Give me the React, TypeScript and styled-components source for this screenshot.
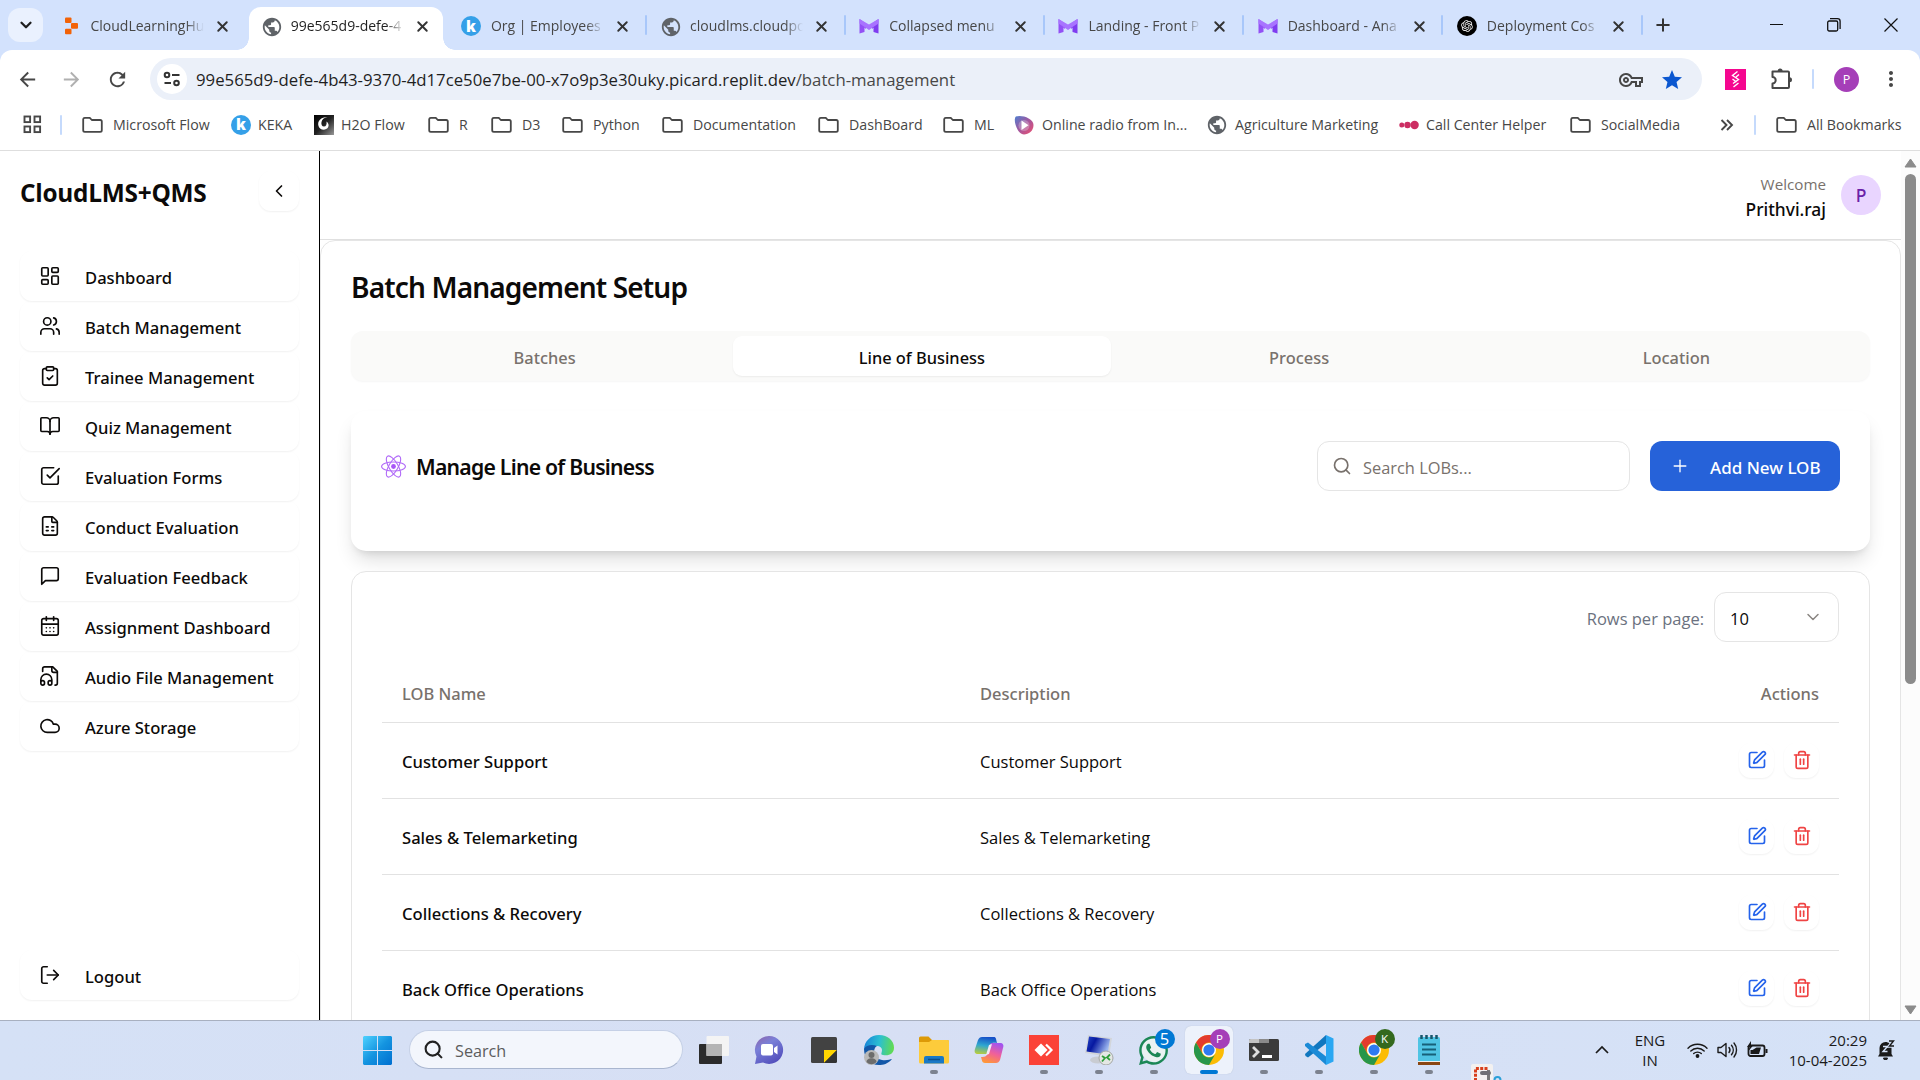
import React from "react";
import styled, { createGlobalStyle, css } from "styled-components";
import {
  BookOpen,
  CalendarDays,
  ChevronDown,
  ChevronLeft,
  ClipboardCheck,
  Cloud,
  FileSpreadsheet,
  LayoutDashboard,
  LogOut,
  Plus,
  Search,
  SquarePen,
  Trash2,
  Users,
  X,
} from "lucide-react";
import {
  MdArrowBack,
  MdArrowForward,
  MdMoreVert,
  MdOutlineVpnKey,
  MdPublic,
  MdRefresh,
  MdStar,
} from "react-icons/md";
import { FaWhatsapp } from "react-icons/fa";
import { RiOpenaiFill } from "react-icons/ri";

const GlobalStyle = createGlobalStyle`
  * { box-sizing: border-box; }
  html, body { margin: 0; padding: 0; overflow: hidden; background: #fff; }
  body { font-family: "Open Sans", "Noto Sans", sans-serif; color: #0c0a09; }
  svg { display: block; flex: none; }
`;

const medium = css`
  font-family: "Noto Sans", "Open Sans", sans-serif;
  font-weight: 500;
`;

const Screen = styled.div`
  width: 1920px;
  height: 1080px;
  display: flex;
  flex-direction: column;
  overflow: hidden;
`;

/* ---------- Browser tab strip ---------- */

const TabStrip = styled.header`
  height: 50px;
  flex: none;
  display: flex;
  background: #d3e2fd;
`;

const TabSearch = styled.div`
  width: 35px;
  height: 34px;
  margin: 8px 3px 0 8px;
  border-radius: 12px;
  background: #eaf1fe;
  display: grid;
  place-items: center;
  color: #1f1f1f;
`;

const TabBox = styled.div<{ $active?: boolean }>`
  position: relative;
  width: 199.2px;
  display: flex;
  align-items: center;
  padding: 2px 0 0 14.5px;
  color: ${(p) => (p.$active ? "#1f1f1f" : "#474747")};
  ${(p) =>
    p.$active &&
    css`
      width: 194px;
      margin: 7px 3.2px 0 4px;
      padding: 0 0 5px 11.5px;
      background: #fff;
      border-radius: 12px 12px 0 0;
      &::before,
      &::after {
        content: "";
        position: absolute;
        bottom: 0;
        width: 12px;
        height: 12px;
      }
      &::before {
        left: -12px;
        background: radial-gradient(circle at 0 0, transparent 11.5px, #fff 12px);
      }
      &::after {
        right: -12px;
        background: radial-gradient(circle at 100% 0, transparent 11.5px, #fff 12px);
      }
    `}
`;

const TabIcon = styled.span`
  width: 20px;
  height: 20px;
  margin-right: 10px;
  flex: none;
  display: grid;
  place-items: center;
  color: #5f6368;
`;

const TabTitle = styled.span`
  width: 113px;
  flex: none;
  overflow: hidden;
  white-space: nowrap;
  font-size: 14px;
  line-height: 24px;
  mask-image: linear-gradient(to right, #000 84%, transparent);
`;

const TabClose = styled.span`
  margin-left: 10px;
  color: #333;
`;

const Divider = styled.span<{ $h: number; $c?: string }>`
  width: 2px;
  height: ${(p) => p.$h}px;
  flex: none;
  border-radius: 1px;
  background: ${(p) => p.$c ?? "#a8c7fa"};
`;

const TabDivider = styled(Divider)`
  margin: 15px -1px 0;
`;

const NewTab = styled.span`
  margin: 15px 0 0 11px;
  color: #333;
`;

const WindowButtons = styled.div`
  margin-left: auto;
  display: flex;
  align-items: center;
  gap: 43px;
  padding-right: 22px;
  height: 49px;
`;

/* ---------- Address bar ---------- */

const ToolbarBack = styled.div`
  flex: none;
  background: #d3e2fd;
`;

const Toolbar = styled.div`
  height: 58px;
  display: flex;
  align-items: center;
  background: #fff;
  border-radius: 12px 12px 0 0;
  padding: 0 16px;
  color: #474747;
`;

const NavButton = styled.span<{ $gap: number; $dim?: boolean }>`
  width: 24px;
  margin-right: ${(p) => p.$gap}px;
  color: ${(p) => (p.$dim ? "#b0b0b0" : "#474747")};
`;

const Omnibox = styled.div`
  width: 1552px;
  height: 42px;
  margin-right: 23px;
  border-radius: 21px;
  background: #ebf0f9;
  display: flex;
  align-items: center;
  padding: 0 18px 0 7px;
`;

const SiteInfo = styled.span`
  width: 30px;
  height: 30px;
  margin-right: 9px;
  border-radius: 50%;
  background: #fff;
  display: grid;
  place-items: center;
`;

const Url = styled.span`
  flex: 1;
  padding-top: 1px;
  font-size: 16.75px;
  line-height: 28px;
  color: #474747;
  white-space: nowrap;
  b {
    font-weight: 400;
    color: #1f1f1f;
  }
`;

const OmniIcons = styled.span`
  display: flex;
  align-items: center;
  gap: 17px;
  padding-top: 1px;
`;

const Extensions = styled.div`
  display: flex;
  align-items: center;
  flex: none;
`;

const ExtensionsButton = styled.span`
  margin: 0 19px 0 24px;
`;

const ProfileDot = styled.span`
  width: 25px;
  height: 25px;
  margin: 0 20px;
  border-radius: 50%;
  background: #a53fb8;
  color: #fff;
  display: grid;
  place-items: center;
  font-size: 12.5px;
  line-height: 25px;
`;

/* ---------- Bookmarks ---------- */

const BookmarkBar = styled.div`
  height: 43px;
  flex: none;
  display: flex;
  align-items: center;
  padding: 0 0 9px 23px;
  border-bottom: 1px solid #dedede;
  color: #474747;
`;

const AppsIcon = styled.span`
  margin-right: 18px;
`;

const BookmarkDivider = styled(Divider)`
  margin-right: 20px;
`;

const BookmarkItem = styled.span<{ $w: number; $gap?: number }>`
  width: ${(p) => p.$w}px;
  flex: none;
  display: flex;
  align-items: center;
  white-space: nowrap;
  font-size: 14.2px;
  line-height: 24px;
  > :first-child {
    margin-right: ${(p) => p.$gap ?? 10}px;
  }
`;

const MoreBookmarks = styled.span`
  width: 34px;
`;

const BadgeLetter = styled.span`
  width: 20px;
  height: 20px;
  border-radius: 50%;
  background: #35a0e8;
  color: #fff;
  display: grid;
  place-items: center;
  font-size: 15px;
  font-weight: 800;
  line-height: 19px;
`;

/* ---------- Page ---------- */

const Page = styled.div`
  height: 869px;
  flex: none;
  display: flex;
  overflow: hidden;
`;

const Sidebar = styled.aside`
  width: 320px;
  flex: none;
  display: flex;
  flex-direction: column;
  padding: 20px;
  border-right: 1px solid #000;
`;

const SidebarHead = styled.div`
  height: 40px;
  flex: none;
  display: flex;
  align-items: center;
  justify-content: space-between;
  margin-bottom: 40px;
`;

const Brand = styled.h1`
  margin: 4px 0 0;
  font-size: 24.4px;
  font-weight: 700;
  letter-spacing: -0.25px;
  line-height: 34px;
`;

const SoftButton = styled.span<{ $size: number; $c?: string }>`
  width: ${(p) => p.$size}px;
  height: ${(p) => p.$size}px;
  border-radius: 12px;
  box-shadow: 0 1px 2px rgba(0, 0, 0, 0.06);
  display: grid;
  place-items: center;
  color: ${(p) => p.$c ?? "#0c0a09"};
`;

const MenuItem = styled.a<{ $bottom?: boolean }>`
  height: 50px;
  flex: none;
  display: flex;
  align-items: center;
  padding-left: 19px;
  border-radius: 12px;
  box-shadow: 0 1px 2px rgba(0, 0, 0, 0.06);
  margin-top: ${(p) => (p.$bottom ? "auto" : 0)};
`;

const MenuLabel = styled.span`
  ${medium}
  margin-left: 24px;
  padding-top: 3px;
  font-size: 16.6px;
  line-height: 24px;
  white-space: nowrap;
`;

const Main = styled.div`
  width: 1581px;
  flex: none;
  display: flex;
  flex-direction: column;
`;

const TopBar = styled.div`
  height: 89px;
  flex: none;
  display: flex;
  align-items: flex-start;
  justify-content: flex-end;
  padding: 24px 20px 0 0;
  border-bottom: 1px solid #e0e0e0;
`;

const Greeting = styled.div`
  margin: -1px 15px 0 0;
  text-align: right;
`;

const Welcome = styled.div`
  font-size: 15.2px;
  line-height: 20px;
  color: #78716c;
`;

const UserName = styled.div`
  ${medium}
  padding-top: 2px;
  font-size: 17.4px;
  line-height: 26px;
`;

const Avatar = styled.span`
  ${medium}
  width: 40px;
  height: 40px;
  border-radius: 50%;
  background: #e9d5ff;
  color: #6b21a8;
  display: grid;
  place-items: center;
  font-size: 17.5px;
  line-height: 41px;
`;

const Panel = styled.main`
  height: 900px;
  flex: none;
  border: 1px solid #e5e5e5;
  border-radius: 15px;
  padding: 28px 30px 0;
`;

const Heading = styled.h2`
  font-family: "Noto Sans", sans-serif;
  font-weight: 600;
  margin: 0 0 25px;
  font-size: 28.1px;
  letter-spacing: -0.88px;
  line-height: 37px;
`;

const TabList = styled.div`
  height: 50px;
  display: grid;
  grid-template-columns: repeat(4, 1fr);
  padding: 5px;
  border-radius: 12px;
  background: #fafaf9;
  box-shadow: 0 1px 2px rgba(0, 0, 0, 0.04);
  margin-bottom: 30px;
`;

const PageTab = styled.span<{ $active?: boolean }>`
  ${medium}
  display: flex;
  align-items: center;
  justify-content: center;
  padding-top: 3px;
  border-radius: 9px;
  font-size: 16.4px;
  line-height: 24px;
  color: ${(p) => (p.$active ? "#0c0a09" : "#78716c")};
  ${(p) => p.$active && "background: #fff; box-shadow: 0 1px 2px rgba(0,0,0,.06);"}
`;

const ManageCard = styled.section`
  height: 140px;
  display: flex;
  align-items: flex-start;
  padding: 30px;
  border-radius: 15px;
  background: #fff;
  box-shadow: 0 12px 20px -4px rgba(0, 0, 0, 0.14), 0 5px 8px -5px rgba(0, 0, 0, 0.14);
  margin-bottom: 20px;
`;

const CardTitle = styled.h3`
  font-family: "Noto Sans", sans-serif;
  font-weight: 600;
  margin: 0 auto 0 0;
  height: 50px;
  display: flex;
  align-items: center;
  gap: 10px;
  font-size: 21.2px;
  letter-spacing: -0.76px;
`;

const SearchField = styled.div`
  width: 313px;
  height: 50px;
  margin-right: 20px;
  padding-left: 14px;
  display: flex;
  align-items: center;
  gap: 11px;
  border: 1px solid #e5e5e5;
  border-radius: 12px;
  color: #78716c;
  font-size: 16.4px;
`;

const Nudge = styled.span`
  padding-top: 3px;
  line-height: 24px;
  white-space: nowrap;
`;

const AddButton = styled.button`
  ${medium}
  width: 190px;
  height: 50px;
  display: flex;
  align-items: center;
  gap: 20px;
  padding: 0 0 0 20px;
  border: 0;
  border-radius: 12px;
  background: #2662d9;
  color: #fff;
  font-size: 17px;
`;

const TableCard = styled.section`
  height: 600px;
  border: 1px solid #e5e5e5;
  border-radius: 15px;
  padding: 20px 30px 0;
  background: #fff;
`;

const PagerRow = styled.div`
  display: flex;
  justify-content: flex-end;
  align-items: center;
  gap: 10px;
  height: 50px;
  font-size: 16.5px;
  color: #6b7280;
`;

const PageSize = styled.div`
  width: 125px;
  height: 50px;
  display: flex;
  align-items: center;
  justify-content: space-between;
  padding: 0 15px;
  border: 1px solid #e5e5e5;
  border-radius: 12px;
  color: #0c0a09;
  > svg {
    color: #8a8682;
  }
`;

const Row = styled.div<{ $head?: boolean }>`
  height: ${(p) => (p.$head ? 81 : 76)}px;
  display: grid;
  grid-template-columns: 578px 1fr auto;
  align-items: center;
  padding: ${(p) => (p.$head ? "22px 20px 0" : "0 20px")};
  border-bottom: 1px solid #e2e2e2;
  font-size: 16.5px;
  ${(p) =>
    p.$head &&
    css`
      ${medium}
      color: #78716c;
    `}
`;

const LobName = styled(Nudge)`
  ${medium}
  font-size: 16.6px;
`;

const Actions = styled.span`
  display: flex;
  gap: 10px;
  padding-bottom: 1px;
`;

const ScrollTrack = styled.div`
  width: 19px;
  flex: none;
  display: flex;
  flex-direction: column;
  align-items: center;
  background: #fcfcfc;
  padding: 7px 0 5px;
`;

const Thumb = styled.span`
  width: 11px;
  height: 510px;
  margin: 6px 0 auto;
  border-radius: 6px;
  background: #8b8b8b;
`;

/* ---------- Taskbar ---------- */

const Taskbar = styled.footer`
  height: 60px;
  flex: none;
  display: flex;
  border-top: 1px solid #a8b0c0;
  background: linear-gradient(to right, #d5e1f6, #d7dff4 45%, #d5e2f7);
  padding-left: 362px;
`;

const StartButton = styled.span`
  margin: 15px 17px 0 1px;
`;

const TaskSearch = styled.div`
  width: 274px;
  height: 39px;
  margin: 9px 3px 0 0;
  display: flex;
  align-items: center;
  gap: 11px;
  padding-left: 13px;
  border: 1px solid #c5d0e6;
  border-bottom-color: #a9b6cf;
  border-radius: 20px;
  background: #f3f6fc;
  color: #5c5c5c;
  font-size: 16.2px;
  > span {
    padding-top: 2px;
    line-height: 24px;
  }
`;

const TaskSlot = styled.span<{ $active?: boolean }>`
  position: relative;
  width: 48px;
  height: 48px;
  margin: 5px 3.5px 0;
  flex: none;
  border-radius: 6px;
  display: grid;
  place-items: center;
  ${(p) => p.$active && "background: #edf2fb; box-shadow: 0 0 1px #aab6cc;"}
`;

const Running = styled.span<{ $active?: boolean }>`
  position: absolute;
  bottom: 0;
  left: 50%;
  transform: translateX(-50%);
  width: ${(p) => (p.$active ? 18 : 8)}px;
  height: 4px;
  border-radius: 2px;
  background: ${(p) => (p.$active ? "#0078d4" : "#7c828f")};
`;

const CountBadge = styled.span<{ $bg: string; $small?: boolean }>`
  position: absolute;
  top: 3px;
  right: 3px;
  width: 20px;
  height: 20px;
  border-radius: 50%;
  background: ${(p) => p.$bg};
  color: #fff;
  text-align: center;
  font-size: ${(p) => (p.$small ? 11.5 : 16.5)}px;
  line-height: 20px;
`;

const SnipSlot = styled.span`
  margin: 43px 0 0 15px;
`;

const Tray = styled.div`
  margin-left: auto;
  display: flex;
  align-items: center;
  color: #1a1a1a;
  font-size: 15px;
  line-height: 20px;
  padding: 0 25px 2px 0;
`;

const Language = styled.span`
  width: 34px;
  margin: 0 20px 0 24px;
  text-align: center;
`;

const TrayIcons = styled.span`
  display: flex;
  align-items: center;
  gap: 9px;
`;

const Clock = styled.span`
  width: 84px;
  margin: 0 10px 0 15px;
  text-align: right;
  white-space: nowrap;
`;

/* ---------- Drawings ---------- */

const Globe = () => <MdPublic size={22} color="#5f6368" />;

const ReplitLogo = () => (
  <svg width="20" height="20" viewBox="0 0 20 20" fill="#f26207">
    <rect x="4" y="1.500" width="6.500" height="5.600" rx="1" />
    <rect x="10" y="7.100" width="7" height="5.600" rx="1" />
    <rect x="4" y="12.700" width="6.500" height="5.600" rx="1" />
  </svg>
);

const MokkupLogo = () => (
  <svg width="20" height="20" viewBox="0 0 20 20">
    <path d="M.5 3 7 7.500V13l-1.500-1.500V16l-5 1.500Z" fill="#9350f5" />
    <path d="M19.500 3 13 7.500V13l1.500-1.500V16l5 1.500Z" fill="#7f3cf0" />
    <path d="M.5 3 10 8.500 19.500 3v4.500L10 14 .5 7.500Z" fill="#a873ff" />
  </svg>
);

const OpenAiLogo = () => (
  <svg width="20" height="20" viewBox="0 0 20 20">
    <circle cx="10" cy="10" r="10" fill="#000" />
    <RiOpenaiFill x="3" y="3" size={14} color="#fff" />
  </svg>
);

const FolderIcon = () => (
  <svg width="21" height="18" viewBox="0 0 21 18" fill="none" stroke="#474747" strokeWidth="1.8" strokeLinejoin="round">
    <path d="M1.200 3.200A1.600 1.600 0 0 1 2.800 1.800h5l2 2.200h8.400a1.600 1.600 0 0 1 1.600 1.600v8.600a1.600 1.600 0 0 1-1.600 1.600H2.800a1.600 1.600 0 0 1-1.600-1.600Z" />
  </svg>
);

const H2oIcon = () => (
  <svg width="20" height="20" viewBox="0 0 20 20">
    <defs>
      <linearGradient id="h2o" x1="0" y1="0" x2="1" y2="1">
        <stop offset="0" stopColor="#000" />
        <stop offset=".5" stopColor="#222" />
        <stop offset="1" stopColor="#999" />
      </linearGradient>
    </defs>
    <rect width="20" height="20" fill="url(#h2o)" />
    <path d="M13.500 2C7 2 3 6 4.500 11c1 4 7 5 9.500 1.500 1.500-2.500 0-5-1.500-6 .5 3-.5 5-2.500 5S7 9.500 7.500 7s2.500-4.500 6-5Z" fill="#fff" />
  </svg>
);

const RadioIcon = () => (
  <svg width="20" height="20" viewBox="0 0 20 20">
    <defs>
      <linearGradient id="radio" x1="0" y1="0" x2="1" y2="1">
        <stop offset="0" stopColor="#4e7fd0" />
        <stop offset=".5" stopColor="#a4569d" />
        <stop offset="1" stopColor="#f0506e" />
      </linearGradient>
    </defs>
    <path d="M2 1.500C7-.5 19.500 3 19.500 10c0 6-5 9.500-9.500 9.500C3 19.500-1.500 4 2 1.500Z" fill="url(#radio)" />
    <circle cx="10" cy="10.500" r="5.500" fill="#fff" opacity=".25" />
    <path d="m7.500 5.500 7 4.800-7 4.800Z" fill="#fff" />
  </svg>
);

const DotsIcon = () => (
  <svg width="20" height="12" viewBox="0 0 20 12" fill="#cc2e63">
    <circle cx="2.800" cy="6" r="2.500" />
    <circle cx="8.500" cy="6" r="3.200" />
    <circle cx="15.600" cy="6" r="4.200" />
  </svg>
);

const AppsGrid = () => (
  <svg width="19" height="19" viewBox="0 0 19 19" fill="none" stroke="#474747" strokeWidth="1.900">
    <rect x="1.500" y="1.500" width="5.600" height="5.600" />
    <rect x="11.500" y="1.500" width="5.600" height="5.600" />
    <rect x="1.500" y="11.500" width="5.600" height="5.600" />
    <rect x="11.500" y="11.500" width="5.600" height="5.600" />
  </svg>
);

const TuneIcon = () => (
  <svg width="18" height="18" viewBox="0 0 18 18" fill="none" stroke="#333" strokeWidth="2">
    <circle cx="4" cy="5" r="2.300" />
    <path d="M9 5h7.500M1.500 13H8" />
    <circle cx="13.500" cy="13" r="2.300" />
  </svg>
);

const StripeExtension = () => (
  <svg width="21" height="21" viewBox="0 0 21 21" fill="none">
    <rect width="21" height="21" fill="#f5068f" />
    <path d="m12.500 2.500-5 4 6 4-5.500 4M14 5.500l-3 2.500M7.500 10l4 3M13.500 14l-5 4" stroke="#fff" strokeWidth="1.400" />
  </svg>
);

const PuzzleIcon = () => (
  <svg width="23" height="24" viewBox="0 0 23 24">
    <path
      d="M2.500 4.500h15.500a1 1 0 0 1 1 1V20a1 1 0 0 1-1 1h-15.500v-4.500a3.200 3.200 0 0 0 0-6.400Z"
      fill="none"
      stroke="#474747"
      strokeWidth="2"
      strokeLinejoin="round"
    />
    <path d="M7.600 4a2.500 2.500 0 0 1 5 0ZM19.500 10.200a2.500 2.500 0 0 1 0 5Z" fill="#474747" />
  </svg>
);

const ReactMark = () => (
  <svg width="25" height="23" viewBox="-11.500 -10.600 23 21.200" fill="none" stroke="#b069f8">
    <circle r="2.200" fill="#a855f7" stroke="none" />
    <ellipse rx="11" ry="4.200" />
    <ellipse rx="11" ry="4.200" transform="rotate(60)" />
    <ellipse rx="11" ry="4.200" transform="rotate(120)" />
  </svg>
);

const StrokeIcon = ({ paths }: { paths: string[] }) => (
  <svg width="22" height="22" viewBox="0 0 24 24" fill="none" stroke="currentColor" strokeWidth="1.8" strokeLinecap="round" strokeLinejoin="round">
    {paths.map((d) => (
      <path key={d} d={d} />
    ))}
  </svg>
);

const Triangle = ({ down }: { down?: boolean }) => (
  <svg width="13" height="10" viewBox="0 0 13 10" fill="#8b8b8b" stroke="#8b8b8b" strokeLinejoin="round">
    <path d={down ? "M1 1h11L6.500 9Z" : "M1 9h11L6.500 1Z"} />
  </svg>
);

const WindowsLogo = () => (
  <svg width="29" height="29" viewBox="0 0 29 29">
    <defs>
      <linearGradient id="win" x1="0" y1="0" x2="1" y2="1">
        <stop offset="0" stopColor="#4fd2ff" />
        <stop offset=".5" stopColor="#1494e0" />
        <stop offset="1" stopColor="#006fd0" />
      </linearGradient>
    </defs>
    <path d="M1 0h13v14H0V1Zm14 0h13l1 1v13H15ZM0 15h14v14H1l-1-1Zm15 0h14v13l-1 1H15Z" fill="url(#win)" />
  </svg>
);

const TaskView = () => (
  <svg width="30" height="30" viewBox="0 0 30 30">
    <rect y="9" width="23" height="20" rx="1" fill="#2b2b2b" />
    <rect x="7.500" y="1" width="22.500" height="20" rx="1" fill="#f4f4f4" />
    <path d="M7.500 9H23v12H7.500Z" fill="#b4b4b4" />
  </svg>
);

const TeamsChat = () => (
  <svg width="30" height="30" viewBox="0 0 30 30">
    <defs>
      <linearGradient id="chat" x1="0" y1="0" x2=".6" y2="1">
        <stop offset="0" stopColor="#8f63a8" />
        <stop offset=".4" stopColor="#7a80d8" />
        <stop offset="1" stopColor="#5450bd" />
      </linearGradient>
    </defs>
    <path d="M15 1a14 14 0 1 1-6 26.600L1 29l1.500-7.500A14 14 0 0 1 15 1Z" fill="url(#chat)" />
    <rect x="7" y="9" width="12" height="11.500" rx="2" fill="#fff" />
    <path d="m20 13 3.500-2.500v9L20 17Z" fill="#fff" />
  </svg>
);

const StickyNotes = () => (
  <svg width="28" height="28" viewBox="0 0 28 28">
    <rect x="1" y="1" width="26" height="26" rx="1.500" fill="#424242" />
    <path d="M14 27V14h13Z" fill="#ffd500" />
    <path d="M14 27 27 14v11.500L25.500 27Z" fill="#333" />
  </svg>
);

const EdgeLogo = () => (
  <svg width="32" height="30" viewBox="0 0 32 30">
    <defs>
      <linearGradient id="edge" x1="0" y1=".4" x2="1" y2=".5">
        <stop offset="0" stopColor="#1683d8" />
        <stop offset=".5" stopColor="#2bbfd2" />
        <stop offset="1" stopColor="#63dc4e" />
      </linearGradient>
    </defs>
    <path d="M1 15C1 6 8 0 16 0c9 0 15 6 15 12.500S26 21 20 20c-3-.5-1-2-1-5 0-2-2-4-5-4-6 0-12 2-13 4Z" fill="url(#edge)" />
    <path d="M1 14c2-4 8-5 13-3-4 2-5 12 5 14 5 1 8-1 10-1-4 5-9 6-13 6C7 30 1 23 1 14Z" fill="#1257a8" />
    <circle cx="8.500" cy="22.500" r="7.500" fill="#b9b9b9" />
    <circle cx="8.500" cy="20" r="3" fill="#6c6c6c" />
    <path d="M3.500 27c0-5 10-5 10 0-3 3-7 3-10 0Z" fill="#6c6c6c" />
  </svg>
);

const ExplorerIcon = () => (
  <svg width="30" height="28" viewBox="0 0 30 28">
    <path d="M0 2a1.500 1.500 0 0 1 1.500-1.500h8L13 4h15.500A1.500 1.500 0 0 1 30 5.500V9H0Z" fill="#dd9a07" />
    <path d="M0 6h10l3-2h15.500A1.500 1.500 0 0 1 30 5.500V26a1.500 1.500 0 0 1-1.500 1.500h-27A1.500 1.500 0 0 1 0 26Z" fill="#fdcb3b" />
    <path d="M5 27.500V22a2 2 0 0 1 2-2h16a2 2 0 0 1 2 2v5.500Z" fill="#1a79c6" />
    <path d="M9 23.500h12" stroke="#0e4f8b" strokeWidth="1.500" />
  </svg>
);

const CopilotIcon = () => (
  <svg width="30" height="28" viewBox="0 0 30 28">
    <defs>
      <linearGradient id="cpA" x1=".5" y1="0" x2=".3" y2="1">
        <stop offset="0" stopColor="#1750c8" />
        <stop offset=".5" stopColor="#2fa7d0" />
        <stop offset="1" stopColor="#b7cc40" />
      </linearGradient>
      <linearGradient id="cpB" x1=".7" y1="0" x2=".3" y2="1">
        <stop offset="0" stopColor="#a254f0" />
        <stop offset=".5" stopColor="#f0609a" />
        <stop offset="1" stopColor="#ff9838" />
      </linearGradient>
    </defs>
    <path d="M8 1h12c2 0 2 2 3 6-6-1-7 1-8 5l-2 6H4c-3 0-4-2-3-5L4 4c1-2 2-3 4-3Z" fill="url(#cpA)" />
    <path d="M22 27H11c-3 0-3-3-4-6 5 0 6-1 7-5l3-9h9c3 0 4 2 3 5l-3 12c-1 2-2 3-4 3Z" fill="url(#cpB)" />
    <path d="m15 9-3 10 3-1 3-10Z" fill="#f3e9f5" />
  </svg>
);

const AnyDesk = () => (
  <svg width="30" height="30" viewBox="0 0 30 30">
    <rect width="30" height="30" fill="#fb4237" />
    <path d="M5.500 15 12 8.500l6.500 6.500-6.500 6.500Z" fill="#fff" />
    <path d="m17 9.500 5.500 5.500-5.500 5.500" fill="none" stroke="#fff" strokeWidth="2.200" />
  </svg>
);

const RemoteDesktop = () => (
  <svg width="30" height="30" viewBox="0 0 30 30">
    <defs>
      <linearGradient id="rdp" x1="0" y1="0" x2="1" y2=".4">
        <stop offset="0" stopColor="#2748c8" />
        <stop offset=".4" stopColor="#0618a0" />
        <stop offset="1" stopColor="#9db8f0" />
      </linearGradient>
    </defs>
    <ellipse cx="14" cy="25" rx="8" ry="3.500" fill="#c9ccd2" />
    <path d="M4 0 28 3 25 22 1 18Z" fill="#d2d5da" />
    <path d="M5 1.500 26 4l-2.500 15.500L2.500 16.500Z" fill="url(#rdp)" />
    <circle cx="22" cy="23" r="7" fill="#e4e7e4" stroke="#a5a8a5" />
    <path d="m18 21 3 2-3 3.500M26 19.500l-3 3 3 2.500" fill="none" stroke="#2f9e3a" strokeWidth="1.800" />
  </svg>
);

const WhatsAppIcon = () => (
  <svg width="33" height="33" viewBox="0 0 33 33">
    <circle cx="17" cy="16" r="12" fill="#eaf2f2" />
    <FaWhatsapp size={33} color="#1b8755" />
  </svg>
);

const ChromeLogo = () => (
  <svg width="30" height="30" viewBox="0 0 30 30">
    <circle cx="15" cy="15" r="15" fill="#fbbc05" />
    <path d="M2 7.500A15 15 0 0 1 28 7.500H15a7.500 7.500 0 0 0-6.500 11.200Z" fill="#e33b2e" />
    <path d="M2 7.500a15 15 0 0 0 13 22.500l6.500-11.200a7.500 7.500 0 0 1-13 0Z" fill="#27964a" />
    <circle cx="15" cy="15" r="7" fill="#fff" />
    <circle cx="15" cy="15" r="5.600" fill="#2f7af0" />
  </svg>
);

const TerminalIcon = () => (
  <svg width="30" height="22" viewBox="0 0 30 22">
    <rect width="30" height="22" rx="1.500" fill="#3b3b3b" />
    <path d="M0 4V1.500A1.500 1.500 0 0 1 1.500 0H10v4Z" fill="#c4c4c4" />
    <path d="M10 0h10v4H10Z" fill="#8a8a8a" />
    <path d="m4 8 5 5-5 5" fill="none" stroke="#ddd" strokeWidth="2.800" />
    <path d="M13 17.500h10" stroke="#fff" strokeWidth="3" />
  </svg>
);

const VsCodeIcon = () => (
  <svg width="30" height="30" viewBox="0 0 30 30">
    <path d="M22 0v8.500L4 22.500l-2.500-1.500L1 19Z" fill="#1177bf" />
    <path d="M22 30v-8.500L4 7.500 1 9v2Z" fill="#1b8ad6" />
    <path d="m22 0 7.500 3.500v23L22 30Z" fill="#2aa7f2" />
  </svg>
);

const NotepadIcon = () => (
  <svg width="22" height="30" viewBox="0 0 22 30">
    <rect y="2" width="22" height="25" rx="1.500" fill="#4fc4e4" />
    <path d="M0 27h22v3H0Z" fill="#8a4613" />
    <path d="M0 26.500h22" stroke="#eee" />
    <path d="M3.500 0v4M8.500 0v4M13.500 0v4M18.500 0v4" stroke="#17556b" strokeWidth="2.500" />
    <path d="M4 9.500h14M4 14.500h14M4 19.500h14" stroke="#176078" strokeWidth="2" />
  </svg>
);

const SnipIcon = () => (
  <svg width="32" height="17" viewBox="0 0 32 17">
    <rect width="22" height="24" rx="2" fill="#f3f1f0" />
    <path d="M4.500 17V4.500H17" fill="none" stroke="#d8401c" strokeWidth="3" strokeDasharray="3 1.300" />
    <path d="M17.500 6v11" stroke="#777" strokeWidth="3" />
    <rect x="9" y="7" width="11" height="4" rx="2" fill="#6f6f74" />
    <circle cx="26.500" cy="16" r="3" fill="none" stroke="#2a9fd8" strokeWidth="2" />
  </svg>
);

const WifiIcon = () => (
  <svg width="21" height="16" viewBox="0 0 21 16" fill="none" stroke="#1a1a1a" strokeWidth="1.400" strokeLinecap="round">
    <path d="M1 6.200a13.500 13.500 0 0 1 19 0M3.800 9a9.500 9.500 0 0 1 13.400 0M6.700 11.600a5.500 5.500 0 0 1 7.600 0" />
    <circle cx="10.500" cy="14" r="1.200" fill="#1a1a1a" />
  </svg>
);

const SpeakerIcon = () => (
  <svg width="21" height="18" viewBox="0 0 21 18" fill="none" stroke="#1a1a1a" strokeWidth="1.400" strokeLinecap="round" strokeLinejoin="round">
    <path d="M1 6.500v5h3l5 4v-13l-5 4ZM12 6.500a4 4 0 0 1 0 5M14.500 4.200a7.500 7.500 0 0 1 0 9.600M17 2a11 11 0 0 1 0 14" />
  </svg>
);

const BatteryIcon = () => (
  <svg width="21" height="17" viewBox="0 0 21 17">
    <rect x="1.500" y="4.500" width="16" height="10.500" rx="2" fill="none" stroke="#1a1a1a" strokeWidth="1.800" />
    <path d="M3.500 13v-4h2l4-2.500H14L12 13ZM18.500 8v4h2V8ZM4 0 0 6h2.500L1.500 10 6.500 4H4Z" fill="#1a1a1a" />
  </svg>
);

const BellIcon = () => (
  <svg width="18" height="20" viewBox="0 0 18 20">
    <path d="M2.500 14V8a6 6 0 0 1 6-6c3 0 6 2 6 6v6l1.500 2.500H1Z" fill="#1a1a1a" />
    <path d="M6.500 18h4a2 2 0 0 1-4 0Z" fill="#1a1a1a" stroke="#1a1a1a" />
    <path d="M6 6.500h4.500L6 11.500h4.500" fill="none" stroke="#d5e2f7" strokeWidth="1.400" />
    <path d="M12 1h4.500L12.500 6h4.500" fill="none" stroke="#d5e2f7" strokeWidth="3.500" />
    <path d="M12 1h4.500L12.500 6h4.500" fill="none" stroke="#1a1a1a" strokeWidth="1.400" />
  </svg>
);

/* ---------- Data ---------- */

const tabs = [
  { title: "CloudLearningHu", icon: <ReplitLogo /> },
  { title: "99e565d9-defe-4", icon: <Globe />, active: true },
  { title: "Org | Employees", icon: <BadgeLetter>k</BadgeLetter> },
  { title: "cloudlms.cloudpo", icon: <Globe />, sep: true },
  { title: "Collapsed menu", icon: <MokkupLogo />, sep: true },
  { title: "Landing - Front P", icon: <MokkupLogo />, sep: true },
  { title: "Dashboard - Ana", icon: <MokkupLogo />, sep: true },
  { title: "Deployment Cos", icon: <OpenAiLogo />, sep: true },
];

const bookmarks = [
  { label: "Microsoft Flow", w: 149, icon: <FolderIcon /> },
  { label: "KEKA", w: 83, gap: 7, icon: <BadgeLetter>k</BadgeLetter> },
  { label: "H2O Flow", w: 114, gap: 7, icon: <H2oIcon /> },
  { label: "R", w: 63, icon: <FolderIcon /> },
  { label: "D3", w: 71, icon: <FolderIcon /> },
  { label: "Python", w: 100, icon: <FolderIcon /> },
  { label: "Documentation", w: 156, icon: <FolderIcon /> },
  { label: "DashBoard", w: 125, icon: <FolderIcon /> },
  { label: "ML", w: 71, icon: <FolderIcon /> },
  { label: "Online radio from In...", w: 192, gap: 8, icon: <RadioIcon /> },
  { label: "Agriculture Marketing", w: 193, gap: 7, icon: <Globe /> },
  { label: "Call Center Helper", w: 171, gap: 7, icon: <DotsIcon /> },
  { label: "SocialMedia", w: 150, icon: <FolderIcon /> },
];

const iconProps = { size: 22, strokeWidth: 1.8 };

const menu = [
  { label: "Dashboard", icon: <LayoutDashboard {...iconProps} /> },
  { label: "Batch Management", icon: <Users {...iconProps} /> },
  { label: "Trainee Management", icon: <ClipboardCheck {...iconProps} /> },
  { label: "Quiz Management", icon: <BookOpen {...iconProps} /> },
  {
    label: "Evaluation Forms",
    icon: <StrokeIcon paths={["m9 11 3 3L22 4", "M21 12v7a2 2 0 0 1-2 2H5a2 2 0 0 1-2-2V5a2 2 0 0 1 2-2h11"]} />,
  },
  { label: "Conduct Evaluation", icon: <FileSpreadsheet {...iconProps} /> },
  {
    label: "Evaluation Feedback",
    icon: <StrokeIcon paths={["M21 15a2 2 0 0 1-2 2H7l-4 4V5a2 2 0 0 1 2-2h14a2 2 0 0 1 2 2z"]} />,
  },
  { label: "Assignment Dashboard", icon: <CalendarDays {...iconProps} /> },
  {
    label: "Audio File Management",
    icon: (
      <StrokeIcon
        paths={[
          "M17.5 22h.5a2 2 0 0 0 2-2V7l-5-5H6a2 2 0 0 0-2 2v3",
          "M14 2v4a2 2 0 0 0 2 2h4",
          "M2 19a2 2 0 1 1 4 0v1a2 2 0 1 1-4 0v-4a6 6 0 0 1 12 0v4a2 2 0 1 1-4 0v-1a2 2 0 1 1 4 0",
        ]}
      />
    ),
  },
  { label: "Azure Storage", icon: <Cloud {...iconProps} /> },
];

const lobs = ["Customer Support", "Sales & Telemarketing", "Collections & Recovery", "Back Office Operations"];

const apps = [
  { id: "view", icon: <TaskView /> },
  { id: "chat", icon: <TeamsChat /> },
  { id: "notes", icon: <StickyNotes /> },
  { id: "edge", icon: <EdgeLogo /> },
  { id: "files", icon: <ExplorerIcon />, running: true },
  { id: "copilot", icon: <CopilotIcon /> },
  { id: "anydesk", icon: <AnyDesk />, running: true },
  { id: "rdp", icon: <RemoteDesktop />, running: true },
  { id: "whatsapp", icon: <WhatsAppIcon />, running: true, badge: "5", bg: "#0078d4" },
  { id: "chrome-p", icon: <ChromeLogo />, running: true, active: true, badge: "P", bg: "#a53fb8" },
  { id: "terminal", icon: <TerminalIcon />, running: true },
  { id: "code", icon: <VsCodeIcon />, running: true },
  { id: "chrome-k", icon: <ChromeLogo />, running: true, badge: "K", bg: "#33691e" },
  { id: "notepad", icon: <NotepadIcon />, running: true },
];

export default function App() {
  return (
    <Screen>
      <GlobalStyle />
      <TabStrip>
        <TabSearch>
          <ChevronDown size={18} strokeWidth={3} />
        </TabSearch>
        {tabs.map((t) => (
          <React.Fragment key={t.title}>
            {t.sep && <TabDivider $h={20} />}
            <TabBox $active={t.active}>
              <TabIcon>{t.icon}</TabIcon>
              <TabTitle>{t.title}</TabTitle>
              <TabClose>
                <X size={17} strokeWidth={2.7} />
              </TabClose>
            </TabBox>
          </React.Fragment>
        ))}
        <TabDivider $h={20} />
        <NewTab>
          <Plus size={20} strokeWidth={2.4} />
        </NewTab>
        <WindowButtons>
          <svg width="14" height="14" viewBox="0 0 14 14" stroke="#111">
            <path d="M0 6.500h13" />
          </svg>
          <svg width="14" height="14" viewBox="0 0 14 14" fill="none" stroke="#111" strokeWidth="1.300">
            <rect x=".7" y="3" width="10" height="10" rx="1.500" />
            <path d="M3 .7h7.500a2.600 2.600 0 0 1 2.600 2.600V11" />
          </svg>
          <svg width="14" height="14" viewBox="0 0 14 14" stroke="#111" strokeWidth="1.200">
            <path d="m.5.5 13 13m0-13-13 13" />
          </svg>
        </WindowButtons>
      </TabStrip>

      <ToolbarBack>
        <Toolbar>
          <NavButton $gap={20}>
            <MdArrowBack size={23} />
          </NavButton>
          <NavButton $gap={22} $dim>
            <MdArrowForward size={23} />
          </NavButton>
          <NavButton $gap={20}>
            <MdRefresh size={23} />
          </NavButton>
          <Omnibox>
            <SiteInfo>
              <TuneIcon />
            </SiteInfo>
            <Url>
              <b>99e565d9-defe-4b43-9370-4d17ce50e7be-00-x7o9p3e30uky.picard.replit.dev</b>/batch-management
            </Url>
            <OmniIcons>
              <MdOutlineVpnKey size={24} />
              <MdStar size={24} color="#0b57d0" />
            </OmniIcons>
          </Omnibox>
          <Extensions>
            <StripeExtension />
            <ExtensionsButton>
              <PuzzleIcon />
            </ExtensionsButton>
            <Divider $h={20} $c="#c5dafc" />
            <ProfileDot>P</ProfileDot>
            <MdMoreVert size={24} />
          </Extensions>
        </Toolbar>
      </ToolbarBack>

      <BookmarkBar>
        <AppsIcon>
          <AppsGrid />
        </AppsIcon>
        <BookmarkDivider $h={20} $c="#c5dafc" />
        {bookmarks.map((b) => (
          <BookmarkItem key={b.label} $w={b.w} $gap={b.gap}>
            {b.icon}
            <span>{b.label}</span>
          </BookmarkItem>
        ))}
        <MoreBookmarks>
          <svg width="14" height="12" viewBox="0 0 14 12" fill="none" stroke="#474747" strokeWidth="1.900">
            <path d="m1.500 1 5 5-5 5M7 1l5 5-5 5" />
          </svg>
        </MoreBookmarks>
        <BookmarkDivider $h={20} $c="#c5dafc" />
        <BookmarkItem $w={130}>
          <FolderIcon />
          <span>All Bookmarks</span>
        </BookmarkItem>
      </BookmarkBar>

      <Page>
        <Sidebar>
          <SidebarHead>
            <Brand>CloudLMS+QMS</Brand>
            <SoftButton $size={40}>
              <ChevronLeft size={20} />
            </SoftButton>
          </SidebarHead>
          {menu.map((m) => (
            <MenuItem key={m.label}>
              {m.icon}
              <MenuLabel>{m.label}</MenuLabel>
            </MenuItem>
          ))}
          <MenuItem $bottom>
            <LogOut {...iconProps} />
            <MenuLabel>Logout</MenuLabel>
          </MenuItem>
        </Sidebar>

        <Main>
          <TopBar>
            <Greeting>
              <Welcome>Welcome</Welcome>
              <UserName>Prithvi.raj</UserName>
            </Greeting>
            <Avatar>P</Avatar>
          </TopBar>
          <Panel>
            <Heading>Batch Management Setup</Heading>
            <TabList>
              <PageTab>Batches</PageTab>
              <PageTab $active>Line of Business</PageTab>
              <PageTab>Process</PageTab>
              <PageTab>Location</PageTab>
            </TabList>
            <ManageCard>
              <CardTitle>
                <ReactMark />
                Manage Line of Business
              </CardTitle>
              <SearchField>
                <Search size={20} />
                <Nudge>Search LOBs...</Nudge>
              </SearchField>
              <AddButton>
                <Plus size={20} strokeWidth={1.6} />
                <Nudge>Add New LOB</Nudge>
              </AddButton>
            </ManageCard>
            <TableCard>
              <PagerRow>
                <Nudge>Rows per page:</Nudge>
                <PageSize>
                  <Nudge>10</Nudge>
                  <ChevronDown size={20} strokeWidth={1.8} />
                </PageSize>
              </PagerRow>
              <Row $head>
                <span>LOB Name</span>
                <span>Description</span>
                <span>Actions</span>
              </Row>
              {lobs.map((lob) => (
                <Row key={lob}>
                  <LobName>{lob}</LobName>
                  <Nudge>{lob}</Nudge>
                  <Actions>
                    <SoftButton $size={35} $c="#2563eb">
                      <SquarePen size={20} />
                    </SoftButton>
                    <SoftButton $size={35} $c="#ef4444">
                      <Trash2 size={20} />
                    </SoftButton>
                  </Actions>
                </Row>
              ))}
            </TableCard>
          </Panel>
        </Main>
        <ScrollTrack>
          <Triangle />
          <Thumb />
          <Triangle down />
        </ScrollTrack>
      </Page>

      <Taskbar>
        <StartButton>
          <WindowsLogo />
        </StartButton>
        <TaskSearch>
          <Search size={21} strokeWidth={2.4} color="#222" />
          <span>Search</span>
        </TaskSearch>
        {apps.map((a) => (
          <TaskSlot key={a.id} $active={a.active}>
            {a.icon}
            {a.running && <Running $active={a.active} />}
            {a.badge && (
              <CountBadge $bg={a.bg!} $small={a.badge !== "5"}>
                {a.badge}
              </CountBadge>
            )}
          </TaskSlot>
        ))}
        <SnipSlot>
          <SnipIcon />
        </SnipSlot>
        <Tray>
          <svg width="14" height="9" viewBox="0 0 14 9" fill="none" stroke="#1a1a1a" strokeWidth="1.700">
            <path d="m1 8 6-6 6 6" />
          </svg>
          <Language>
            ENG
            <br />
            IN
          </Language>
          <TrayIcons>
            <WifiIcon />
            <SpeakerIcon />
            <BatteryIcon />
          </TrayIcons>
          <Clock>
            20:29
            <br />
            10-04-2025
          </Clock>
          <BellIcon />
        </Tray>
      </Taskbar>
    </Screen>
  );
}
